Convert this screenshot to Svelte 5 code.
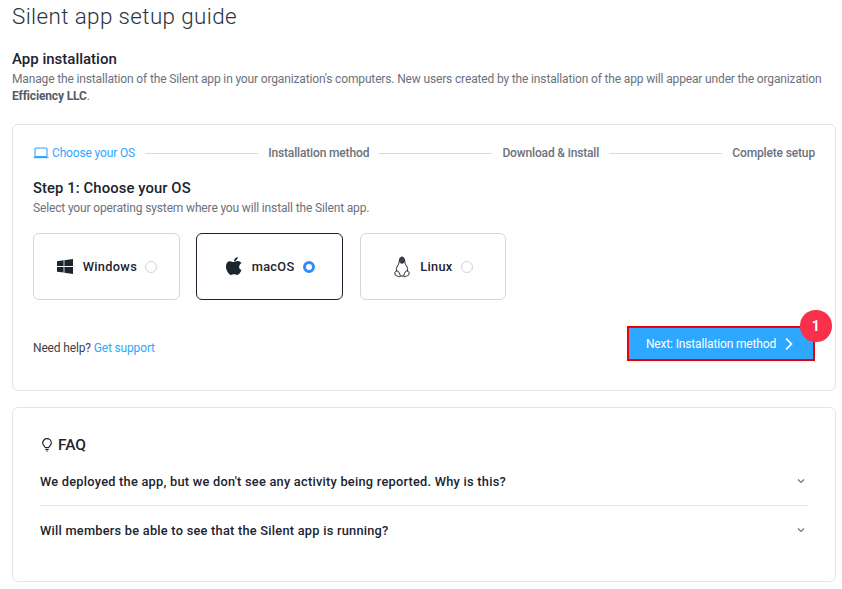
<script>
  const steps = ['Installation method', 'Download & install', 'Complete setup'];
  const oses = [
    { id: 'windows', name: 'Windows' },
    { id: 'macos', name: 'macOS', selected: true },
    { id: 'linux', name: 'Linux' }
  ];
  const faqs = [
    "We deployed the app, but we don't see any activity being reported. Why is this?",
    'Will members be able to see that the Silent app is running?'
  ];
</script>

<main class="page">
  <h1>Silent app setup guide</h1>
  <h2>App installation</h2>
  <p class="intro">Manage the installation of the Silent app in your organization's computers. New users created by the installation of the app will appear under the organization <b>Efficiency LLC</b>.</p>

  <section class="card setup">
    <div class="stepper">
      <span class="step active">
        <svg width="16" height="12" viewBox="0 0 16 12" fill="none" stroke="#2ea7ff" stroke-width="1.1"><rect x="2" y="1" width="12" height="8.5" rx="1"/><path d="M.5 10.5h15" stroke-width="1.4"/></svg>
        Choose your OS
      </span>
      {#each steps as s}
        <span class="line"></span>
        <span class="step">{s}</span>
      {/each}
    </div>

    <h3>Step 1: Choose your OS</h3>
    <p class="sub">Select your operating system where you will install the Silent app.</p>

    <div class="oses">
      {#each oses as os}
        <div class="os" class:selected={os.selected}>
          {#if os.id === 'windows'}
            <svg class="ic" width="16" height="15" viewBox="0 0 16 15" fill="#1c2430"><path d="M0 2.3 6.6 1.3V7H0zM7.4 1.2 16 0v7H7.4zM0 7.9h6.6v5.7L0 12.7zM7.4 7.9H16V15l-8.6-1.2z"/></svg>
          {:else if os.id === 'macos'}
            <svg class="ic" width="16" height="19" viewBox="0 0 16 19" fill="#1c2430"><path d="M13.2 10c0-1.7.8-2.9 2.3-3.9-.9-1.2-2.2-1.9-3.9-2-1.6-.1-3.3 1-4 1-.7 0-2.2-.9-3.5-.9C1.8 4.2 0 6 0 9.5c0 1.1.2 2.2.6 3.3.5 1.500 2.400 5.200 4.400 5.100 1 0 1.800-.7 3.100-.7 1.300 0 2 .7 3.100.7 2 0 3.700-3.300 4.200-4.800-2.700-1.300-2.200-3-2.200-3.100zM10.800 2.500c1.100-1.300 1-2.400 1-2.500-1 .1-2.100.7-2.700 1.400-.7.8-1.100 1.700-1 2.800 1 .1 2-.5 2.700-1.700z"/></svg>
          {:else}
            <svg class="ic" width="16" height="22" viewBox="0 0 16 22" fill="none" stroke="#1c2430" stroke-width="1"><path d="M5.100 5.500c0 2-.6 2.800-1.600 4.400-1 1.800-1.500 3.300-.9 5.300M10.900 5.500c0 2 .6 2.800 1.600 4.400 1 1.800 1.500 3.300.9 5.300"/><path d="M5.400 5.500C5.100 3 6.400 1 8 1s2.900 2 2.600 4.500C10 6.500 9 7.200 8 7.200S6 6.500 5.400 5.500z" fill="#3a424d"/><path d="M2.500 15.200c-1 .3-1.800.8-1.600 1.600.2.900.3 1.500.2 2 .2.700 2 .9 3.400 1.800 1 .5 1.800-.2 1.700-1.100-.1-1.100-1-2.700-1.700-3.900-.5-.8-1.200-.7-2-.4zM13.500 15.200c1 .3 1.800.8 1.600 1.600-.2.900-.3 1.500-.2 2-.2.700-2 .9-3.400 1.800-1 .5-1.800-.2-1.700-1.100.1-1.100 1-2.700 1.700-3.900.5-.8 1.200-.7 2-.4zM6 20h4"/></svg>
          {/if}
          <span class="os-name">{os.name}</span>
          <span class="radio"></span>
        </div>
      {/each}
    </div>

    <div class="actions">
      <span class="help">Need help? <a href="#support">Get support</a></span>
      <div class="btn-wrap">
        <button>
          Next: Installation method
          <svg width="8" height="14" viewBox="0 0 8 14" fill="none" stroke="#fff" stroke-width="1.7"><path d="M1 1.500 6.500 7 1 12.500"/></svg>
        </button>
        <span class="badge">1</span>
      </div>
    </div>
  </section>

  <section class="card faq">
    <h3 class="faq-title">
      <svg width="12" height="14" viewBox="0 0 12 14" fill="none" stroke="#1c2430" stroke-width="1.2"><path d="M4.200 9.500C4 8.300 1.700 7.500 1.700 5a4.300 4.300 0 0 1 8.600 0c0 2.500-2.300 3.300-2.500 4.500z"/><path d="M4.300 11.300h3.400M5.200 13h1.600"/></svg>
      FAQ
    </h3>
    {#each faqs as q, i}
      <div class="q" class:first={i === 0}>
        <span>{q}</span>
        <svg class="chev" width="10" height="6" viewBox="0 0 10 6" fill="none" stroke="#6f7680" stroke-width="1.2"><path d="M2 1.500l3 3 3-3"/></svg>
      </div>
    {/each}
  </section>
</main>

<style>
  :global(body) { background: #fff; }
  .page { padding: 0 6px 0 12px; font-family: Roboto, sans-serif; color: #1c2430; height: 589px; box-sizing: border-box; overflow: hidden; }
  h1 { margin: 0; padding-top: 3px; font-size: 22.4px; line-height: 27px; font-weight: 300; letter-spacing: .4px; color: #2a3340; }
  h2 { margin: 20px 0 0; font-size: 15px; line-height: 18px; font-weight: 500; }
  .intro { margin: 3px 0 0; font-size: 12px; letter-spacing: -.15px; line-height: 17px; color: #6b727c; }
  .intro b { font-weight: 700; color: #555c66; }
  .card { border: 1px solid #e3e5e8; border-radius: 6px; box-sizing: border-box; }
  .setup { margin-top: 19px; height: 267px; padding: 19px 20px 0; }
  .stepper { display: flex; align-items: center; height: 18px; gap: 10px; }
  .step { font-size: 12px; letter-spacing: -.15px; font-weight: 500; color: #6b727c; white-space: nowrap; display: flex; align-items: center; gap: 3px; }
  .step.active { color: #2ea7ff; font-weight: 400; }
  .line { flex: 1; height: 1px; background: #d6d9dd; }
  h3 { margin: 17px 0 0; font-size: 14.8px; line-height: 18px; font-weight: 500; letter-spacing: .1px; }
  .sub { margin: 3px 0 0; font-size: 12px; letter-spacing: -.15px; line-height: 16px; color: #6b727c; }
  .oses { display: flex; gap: 16.5px; margin-top: 17px; }
  .os { width: 146.75px; height: 67px; box-sizing: border-box; border: 1px solid #d3d6da; border-radius: 6px; display: flex; align-items: center; justify-content: center; padding-left: 1px; }
  .os.selected { border-color: #1c2430; }
  .ic { flex: none; margin-right: 10px; }
  .os-name { font-size: 12.8px; font-weight: 500; letter-spacing: .3px; margin-right: 8px; }
  .radio { width: 12px; height: 12px; border-radius: 50%; border: 1.5px solid #d0d4d9; box-sizing: border-box; }
  .selected .radio { border: 3.5px solid #2e8cff; }
  .actions { display: flex; align-items: center; justify-content: space-between; margin-top: 26px; }
  .help { font-size: 12px; letter-spacing: -.15px; color: #3a424d; margin-top: 9px; }
  a { color: #2ea7ff; text-decoration: none; }
  .btn-wrap { position: relative; }
  button { width: 188px; height: 35px; box-sizing: border-box; background: #2ea7ff; border: 2px solid #e8000d; color: #fff; font: 400 12px Roboto, sans-serif; letter-spacing: -.15px; display: flex; align-items: center; justify-content: center; gap: 9px; padding: 0 3px 0 0; }
  .badge { position: absolute; top: -16px; right: -16.5px; width: 31.5px; height: 31.5px; border-radius: 50%; background: #f9304a; color: #fff; font-size: 14px; font-weight: 700; display: flex; align-items: center; justify-content: center; }
  .faq { margin-top: 16px; height: 175px; padding: 0 27px; }
  .faq-title { margin: 28px 0 0; display: flex; align-items: center; gap: 5px; font-size: 15.5px; letter-spacing: 0; }
  .faq-title svg { margin-left: 1px; }
  .q { display: flex; align-items: center; justify-content: space-between; height: 49px; border-top: 1px solid #e3e5e8; font-size: 12.8px; font-weight: 500; letter-spacing: .24px; padding-right: 2px; }
  .q.first { border-top: 0; margin-top: 2px; height: 47px; padding-top: 2px; }
  .chev { position: relative; top: -1px; }
</style>
